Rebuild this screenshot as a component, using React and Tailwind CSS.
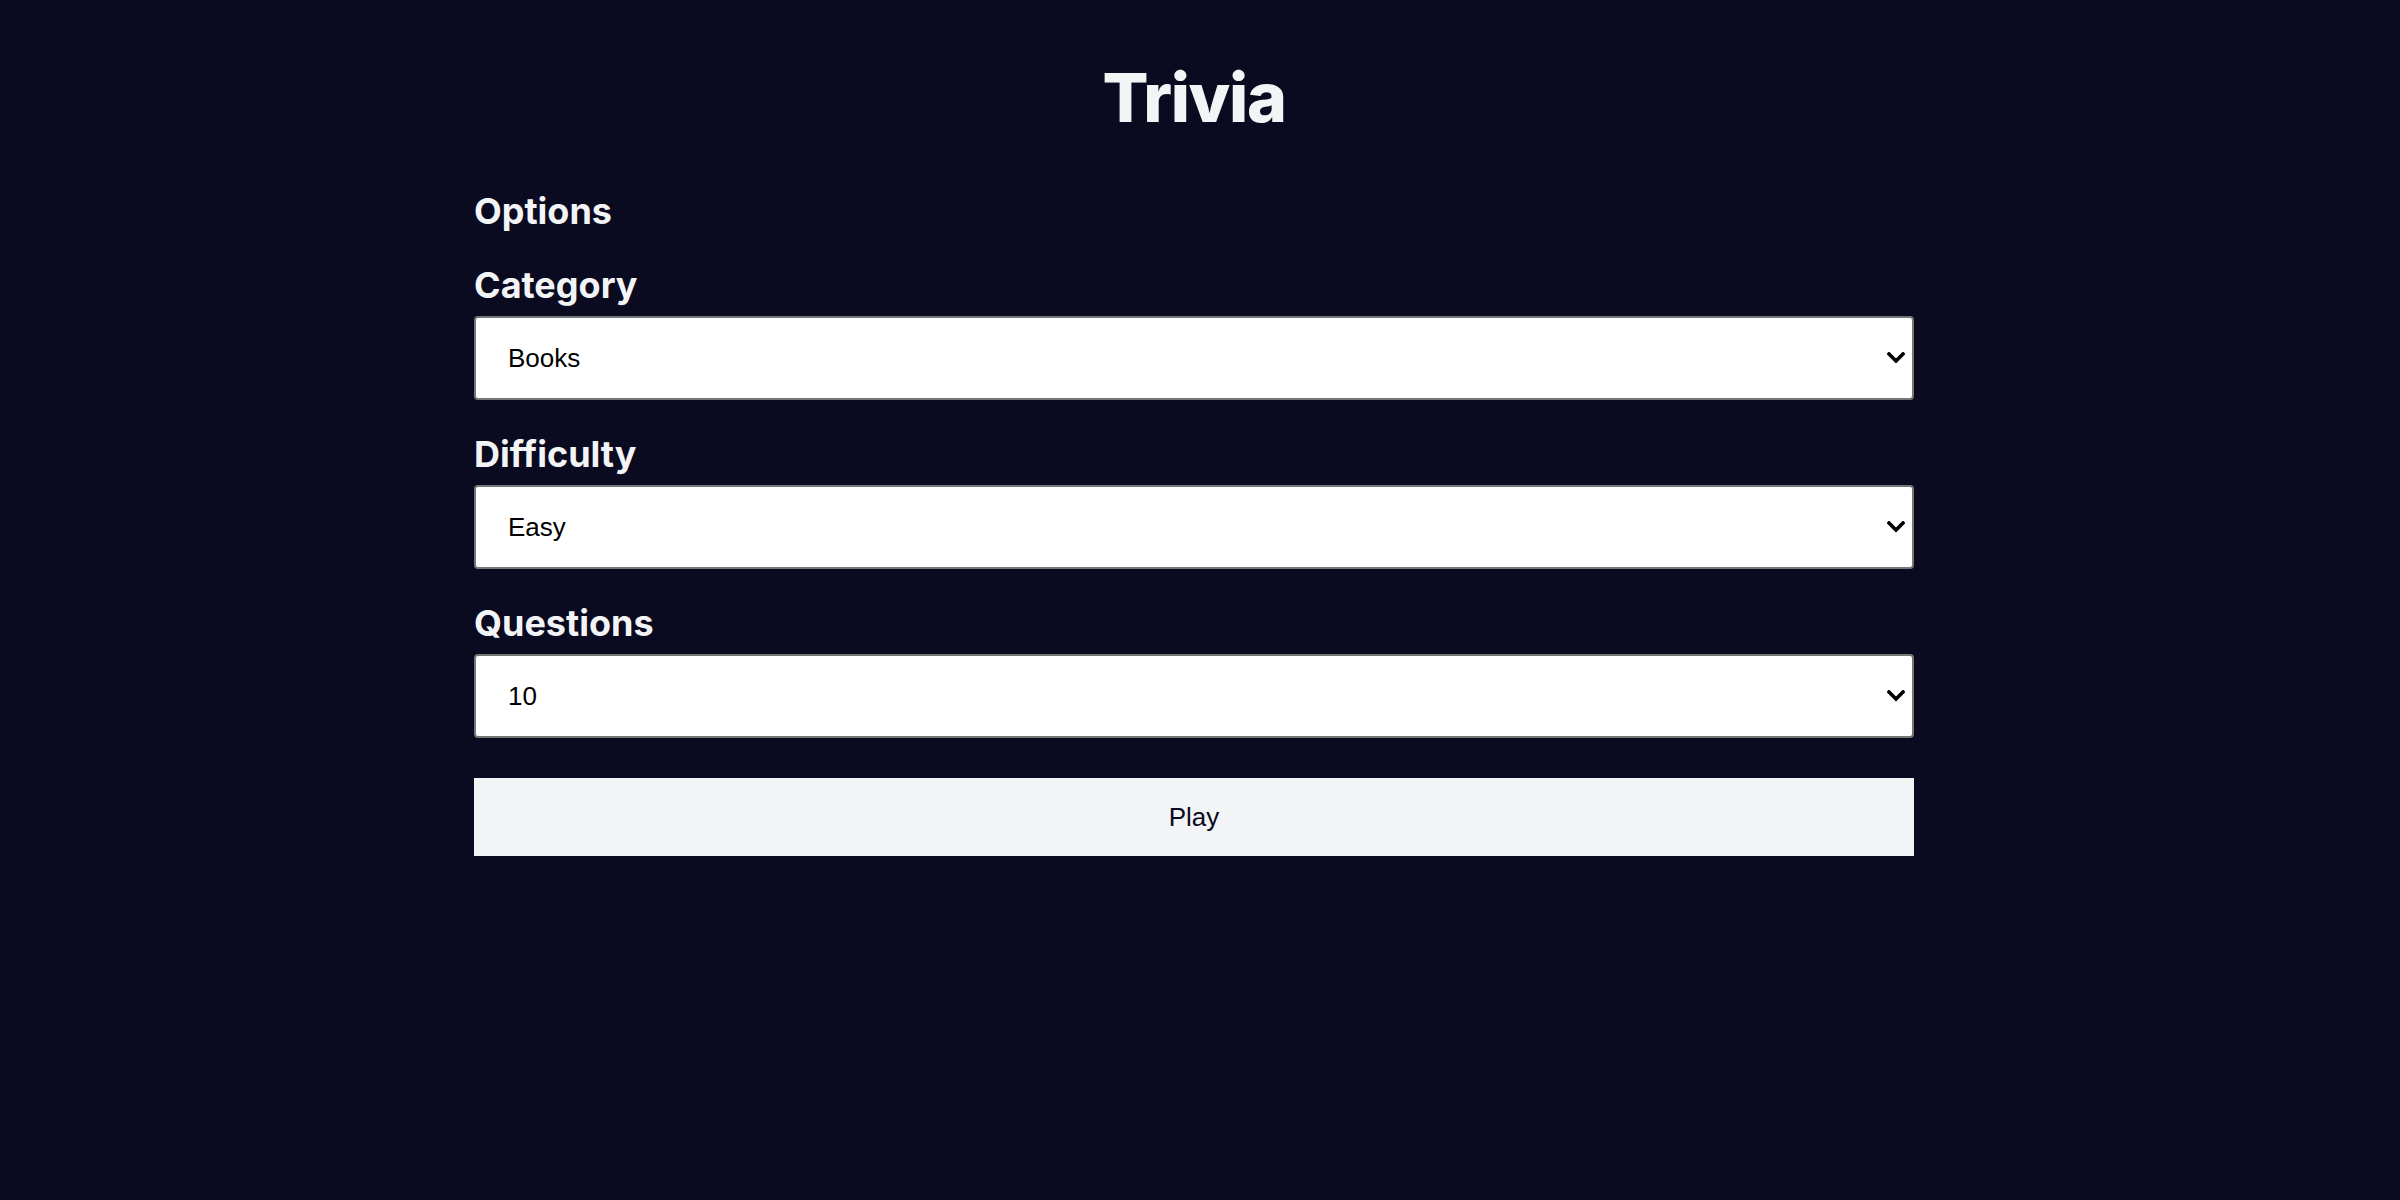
import React from 'react';

const Chevron = () => (
  <svg width="18" height="12" viewBox="0 0 18 12" className="pointer-events-none absolute right-[9px] top-1/2 -translate-y-1/2">
    <polyline points="2,2 9,9 16,2" fill="none" stroke="#000" strokeWidth="3.6" strokeLinecap="square" />
  </svg>
);

const Field = ({ label, value, options }) => (
  <div className="mt-[36px] first:mt-0">
    <label className="block text-[36px] font-bold leading-none text-gray-100 mb-[13px]">{label}</label>
    <div className="relative">
      <select
        defaultValue={value}
        className="block w-full h-[84px] appearance-none bg-white border-2 border-[#767676] rounded-[4px] pl-[32px] text-[26px] text-black outline-none"
        style={{ fontFamily: '"Liberation Sans", Arial, sans-serif' }}
      >
        {options.map((o) => <option key={o}>{o}</option>)}
      </select>
      <Chevron />
    </div>
  </div>
);

export default function App() {
  return (
    <div className="min-h-screen bg-[#0a0a20] pr-3 [font-variant-ligatures:none]" style={{ fontFamily: 'Inter, Lato, sans-serif' }}>
      <div className="w-[1440px] mx-auto pt-[63px]">
        <h1 className="text-center text-[68px] font-extrabold leading-none tracking-[-0.02em] text-gray-100">Trivia</h1>
        <h2 className="mt-[62px] text-[36px] font-bold leading-none text-gray-100">Options</h2>
        <div className="mt-[38px]">
          <Field label="Category" value="Books" options={['Books', 'Film', 'Music', 'General Knowledge']} />
          <Field label="Difficulty" value="Easy" options={['Easy', 'Medium', 'Hard']} />
          <Field label="Questions" value="10" options={['5', '10', '15', '20']} />
        </div>
        <button
          className="mt-[40px] block w-full h-[78px] bg-gray-100 text-[26px] text-[#0a0a20]"
          style={{ fontFamily: '"Liberation Sans", Arial, sans-serif' }}
        >
          Play
        </button>
      </div>
    </div>
  );
}
